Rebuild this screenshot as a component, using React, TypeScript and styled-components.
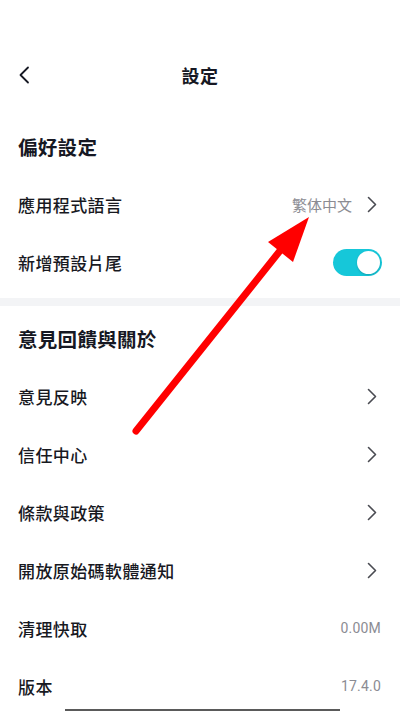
import React, { useState } from 'react';
import styled, { createGlobalStyle } from 'styled-components';

const GlobalStyle = createGlobalStyle`
  html, body {
    margin: 0;
    padding: 0;
    background: #ffffff;
  }
  body {
    font-family: "Noto Sans CJK TC", "Noto Sans", Roboto, sans-serif;
    color: #161823;
  }
`;

const Page = styled.div`
  position: relative;
  width: 400px;
  height: 711px;
  overflow: hidden;
  background: #ffffff;
`;

const StatusSpacer = styled.div`
  height: 46px;
`;

const Header = styled.header`
  position: relative;
  height: 58px;
  display: flex;
  align-items: center;
  justify-content: center;
`;

const BackButton = styled.button`
  position: absolute;
  left: 14px;
  top: 50%;
  transform: translateY(-50%);
  border: none;
  background: none;
  padding: 4px;
  display: flex;
  cursor: pointer;
`;

const Title = styled.h1`
  margin: 0;
  font-size: 18px;
  font-weight: 700;
  letter-spacing: 0.5px;
`;

const Section = styled.section<{ $top: number; $bottom?: number }>`
  padding-top: ${p => p.$top}px;
  padding-bottom: ${p => p.$bottom ?? 0}px;
`;

const SectionTitle = styled.h2`
  margin: 0;
  height: 58px;
  display: flex;
  align-items: center;
  padding: 0 18px;
  font-size: 19.5px;
  font-weight: 700;
  letter-spacing: 0.3px;
`;

const Band = styled.div`
  height: 8px;
  background: #f3f4f6;
`;

const Row = styled.div<{ $right: number }>`
  height: 58px;
  display: flex;
  align-items: center;
  padding: 0 ${p => p.$right}px 0 18px;
`;

const Label = styled.span`
  flex: 1;
  font-size: 17px;
  font-weight: 500;
  letter-spacing: 0.4px;
  color: #18191f;
`;

const Value = styled.span<{ $cjk?: boolean }>`
  font-family: ${p => (p.$cjk ? '"Noto Sans CJK TC", sans-serif' : 'Roboto, "Noto Sans", sans-serif')};
  font-size: ${p => (p.$cjk ? 15 : 14)}px;
  color: #8b8c93;
  margin-right: ${p => (p.$cjk ? 15 : 0)}px;
  letter-spacing: ${p => (p.$cjk ? 0 : 0.2)}px;
`;

const Track = styled.button<{ $on: boolean }>`
  position: relative;
  width: 49px;
  height: 27px;
  border-radius: 14px;
  border: none;
  padding: 0;
  background: ${p => (p.$on ? '#16c7d9' : '#d6d7da')};
  cursor: pointer;
`;

const Knob = styled.span<{ $on: boolean }>`
  position: absolute;
  top: 2px;
  left: ${p => (p.$on ? 24 : 2)}px;
  width: 23px;
  height: 23px;
  border-radius: 50%;
  background: #ffffff;
  box-shadow: 0 1px 2px rgba(0, 0, 0, 0.18);
`;

const HomeBar = styled.div`
  position: absolute;
  left: 65px;
  right: 60px;
  bottom: 0;
  height: 2px;
  background: #5a5a5a;
`;

const ArrowLayer = styled.svg`
  position: absolute;
  left: 0;
  top: 0;
  pointer-events: none;
`;

function Chevron() {
  return (
    <svg width='10' height='17' viewBox='0 0 10 17'>
      <path d='M1.5 1.5 L8.5 8.5 L1.5 15.5' fill='none' stroke='#4a4b52' strokeWidth='1.6' strokeLinecap='round' strokeLinejoin='round' />
    </svg>
  );
}

function BackIcon() {
  return (
    <svg width='12' height='18' viewBox='0 0 12 18'>
      <path d='M10 1.5 L2.5 9 L10 16.5' fill='none' stroke='#161823' strokeWidth='1.8' strokeLinecap='round' strokeLinejoin='round' />
    </svg>
  );
}

function Toggle() {
  const [on, setOn] = useState(true);
  return (
    <Track $on={on} onClick={() => setOn(!on)} aria-label='toggle'>
      <Knob $on={on} />
    </Track>
  );
}

interface LinkRowProps {
  label: string;
  value?: string;
}

function LinkRow({ label, value }: LinkRowProps) {
  return (
    <Row $right={23}>
      <Label>{label}</Label>
      {value && <Value $cjk>{value}</Value>}
      <Chevron />
    </Row>
  );
}

function InfoRow({ label, value }: { label: string; value: string }) {
  return (
    <Row $right={19}>
      <Label>{label}</Label>
      <Value>{value}</Value>
    </Row>
  );
}

const aboutLinks = ['意見反映', '信任中心', '條款與政策', '開放原始碼軟體通知'];

export default function App() {
  return (
    <Page>
      <GlobalStyle />
      <StatusSpacer />
      <Header>
        <BackButton aria-label='back'>
          <BackIcon />
        </BackButton>
        <Title>設定</Title>
      </Header>

      <Section $top={13} $bottom={7}>
        <SectionTitle>偏好設定</SectionTitle>
        <LinkRow label='應用程式語言' value='繁体中文' />
        <Row $right={18}>
          <Label>新增預設片尾</Label>
          <Toggle />
        </Row>
      </Section>

      <Band />

      <Section $top={3}>
        <SectionTitle>意見回饋與關於</SectionTitle>
        {aboutLinks.map(label => (
          <LinkRow key={label} label={label} />
        ))}
        <InfoRow label='清理快取' value='0.00M' />
        <InfoRow label='版本' value='17.4.0' />
      </Section>

      <ArrowLayer width='400' height='711' viewBox='0 0 400 711'>
        <line x1='136' y1='431' x2='287' y2='242' stroke='#ff0000' strokeWidth='7' strokeLinecap='round' />
        <polygon points='309,217 268,242 293,262' fill='#ff0000' />
      </ArrowLayer>

      <HomeBar />
    </Page>
  );
}
